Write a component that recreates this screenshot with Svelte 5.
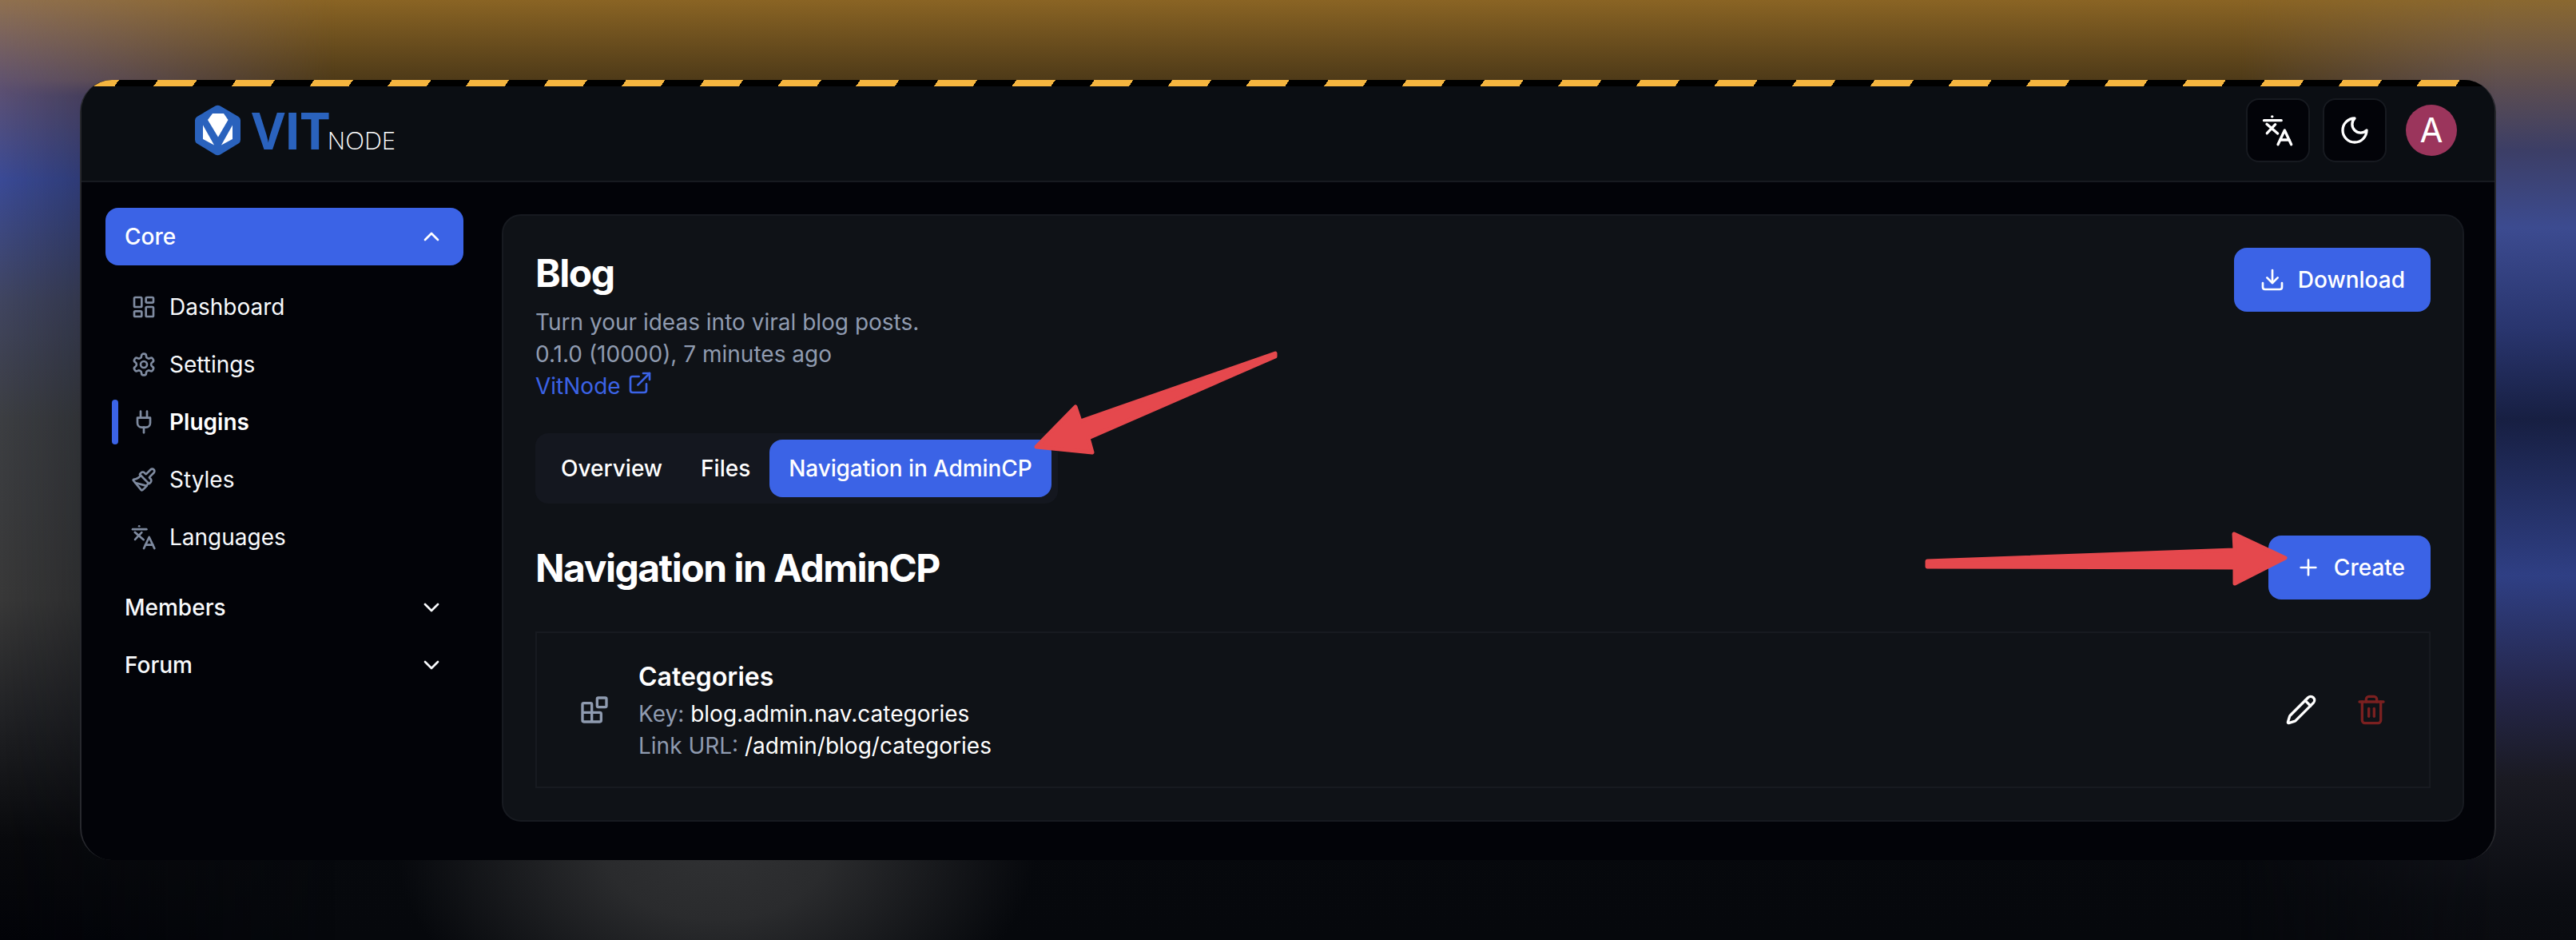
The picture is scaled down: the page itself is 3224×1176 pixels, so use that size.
<script>
  const icons = {
    dashboard: ['M4 3h5a1 1 0 0 1 1 1v7a1 1 0 0 1-1 1H4a1 1 0 0 1-1-1V4a1 1 0 0 1 1-1z', 'M15 3h5a1 1 0 0 1 1 1v3a1 1 0 0 1-1 1h-5a1 1 0 0 1-1-1V4a1 1 0 0 1 1-1z', 'M15 12h5a1 1 0 0 1 1 1v7a1 1 0 0 1-1 1h-5a1 1 0 0 1-1-1v-7a1 1 0 0 1 1-1z', 'M4 16h5a1 1 0 0 1 1 1v3a1 1 0 0 1-1 1H4a1 1 0 0 1-1-1v-3a1 1 0 0 1 1-1z'],
    settings: ['M12.22 2h-.44a2 2 0 0 0-2 2v.18a2 2 0 0 1-1 1.73l-.43.25a2 2 0 0 1-2 0l-.15-.08a2 2 0 0 0-2.73.73l-.22.38a2 2 0 0 0 .73 2.73l.15.1a2 2 0 0 1 1 1.72v.51a2 2 0 0 1-1 1.74l-.15.09a2 2 0 0 0-.73 2.73l.22.38a2 2 0 0 0 2.73.73l.15-.08a2 2 0 0 1 2 0l.43.25a2 2 0 0 1 1 1.73V20a2 2 0 0 0 2 2h.44a2 2 0 0 0 2-2v-.18a2 2 0 0 1 1-1.73l.43-.25a2 2 0 0 1 2 0l.15.08a2 2 0 0 0 2.73-.73l.22-.39a2 2 0 0 0-.73-2.73l-.15-.08a2 2 0 0 1-1-1.74v-.5a2 2 0 0 1 1-1.74l.15-.09a2 2 0 0 0 .73-2.73l-.22-.38a2 2 0 0 0-2.73-.73l-.15.08a2 2 0 0 1-2 0l-.43-.25a2 2 0 0 1-1-1.73V4a2 2 0 0 0-2-2z', 'M15 12a3 3 0 1 1-6 0 3 3 0 0 1 6 0z'],
    plug: ['M12 22v-5', 'M9 8V2', 'M15 8V2', 'M18 8v5a4 4 0 0 1-4 4h-4a4 4 0 0 1-4-4V8Z'],
    brush: ['m14.622 17.897-10.68-2.913', 'M18.376 2.622a1 1 0 1 1 3.002 3.002L17.36 9.643a.5.5 0 0 0 0 .707l.944.944a2.41 2.41 0 0 1 0 3.408l-.944.944a.5.5 0 0 1-.707 0L8.354 7.348a.5.5 0 0 1 0-.707l.944-.944a2.41 2.41 0 0 1 3.408 0l.944.944a.5.5 0 0 0 .707 0z', 'M9 8c-1.804 2.71-3.97 3.46-6.583 3.948a.507.507 0 0 0-.302.819l7.32 8.883a1 1 0 0 0 1.185.204C12.735 20.405 16 16.792 16 15'],
    languages: ['M1.5 4.6h13', 'M7.6 1.7h.1', 'M3.6 7.4l8.2 7', 'M3.8 14.2l6.2-6.6', 'M12 22.6l5-10.6 5 10.6', 'M13.6 19.2h6.8'],
    moon: ['M12 3a6 6 0 0 0 9 9 9 9 0 1 1-9-9Z'],
    download: ['M21 15v4a2 2 0 0 1-2 2H5a2 2 0 0 1-2-2v-4', 'M7 10l5 5 5-5', 'M12 15V3'],
    plus: ['M5 12h14', 'M12 5v14'],
    up: ['m18 15-6-6-6 6'],
    down: ['m6 9 6 6 6-6'],
    external: ['M15 3h6v6', 'M10 14 21 3', 'M18 13v6a2 2 0 0 1-2 2H5a2 2 0 0 1-2-2V8a2 2 0 0 1 2-2h6'],
    blocks: ['M15 3h5a1 1 0 0 1 1 1v5a1 1 0 0 1-1 1h-5a1 1 0 0 1-1-1V4a1 1 0 0 1 1-1z', 'M10 21V8a1 1 0 0 0-1-1H4a1 1 0 0 0-1 1v12a1 1 0 0 0 1 1h12a1 1 0 0 0 1-1v-5a1 1 0 0 0-1-1H3'],
    pencil: ['M21.174 6.812a1 1 0 0 0-3.986-3.987L3.842 16.174a2 2 0 0 0-.5.83l-1.321 4.352a.5.5 0 0 0 .623.622l4.353-1.32a2 2 0 0 0 .83-.497z', 'm15 5 4 4'],
    trash: ['M3 6h18', 'M19 6v14c0 1-1 2-2 2H7c-1 0-2-1-2-2V6', 'M8 6V4c0-1 1-2 2-2h4c1 0 2 1 2 2v2', 'M10 11v6', 'M14 11v6']
  };

  const navItems = [
    { label: 'Dashboard', icon: 'dashboard' },
    { label: 'Settings', icon: 'settings' },
    { label: 'Plugins', icon: 'plug', active: true },
    { label: 'Styles', icon: 'brush' },
    { label: 'Languages', icon: 'languages' }
  ];
  const tabs = ['Overview', 'Files', 'Navigation in AdminCP'];
</script>

{#snippet icon(name, size = 32)}
  <svg class="icon" width={size} height={size} viewBox="0 0 24 24" fill="none" stroke="currentColor" stroke-width="2" stroke-linecap="round" stroke-linejoin="round">
    {#each icons[name] as d}
      <path {d} />
    {/each}
  </svg>
{/snippet}

<div class="page">
  <div class="glow glow-left"></div>
  <div class="glow glow-right"></div>
  <div class="window">
    <div class="stripe"></div>
    <header>
      <div class="logo">
        <svg width="58" height="64" viewBox="0 0 58 64">
          <path d="M25.5 1.5 Q28.5 0 31.5 1.5 L54.5 15 Q57 16.5 57 19.5 L57 44 Q57 47 54.5 48.5 L31.5 62.5 Q28.5 64 25.5 62.5 L2.5 48.5 Q0 47 0 44 L0 19.5 Q0 16.5 2.5 15 Z" fill="#2a62bd" />
          <path d="M16 19 L22 11 L36 11 L41.5 19 L29 40.5 Z" fill="#fff" />
          <path d="M10 25.5 L24 50.5 L10 43 Z" fill="#fff" />
          <path d="M47 25.5 L33 50.5 L47 43 Z" fill="#fff" />
        </svg>
        <span class="vit">VIT</span><span class="node">NODE</span>
      </div>
      <div class="header-actions">
        <button class="square">{@render icon('languages', 40)}</button>
        <button class="square">{@render icon('moon', 40)}</button>
        <div class="avatar">A</div>
      </div>
    </header>
    <div class="body">
      <aside>
        <button class="group open">Core {@render icon('up')}</button>
        <nav>
          {#each navItems as item}
            <div class="item" class:active={item.active}>
              <span class="item-icon">{@render icon(item.icon)}</span>
              {item.label}
            </div>
          {/each}
        </nav>
        <button class="group">Members {@render icon('down')}</button>
        <button class="group">Forum {@render icon('down')}</button>
      </aside>
      <main>
        <div class="plugin-head">
          <div>
            <h1>Blog</h1>
            <p class="muted">Turn your ideas into viral blog posts.</p>
            <p class="muted">0.1.0 (10000), 7 minutes ago</p>
            <p class="link">VitNode <span class="link-icon">{@render icon('external')}</span></p>
          </div>
          <button class="primary">{@render icon('download')} Download</button>
        </div>
        <div class="tabs">
          {#each tabs as tab, i}
            <div class="tab" class:selected={i === 2}>{tab}</div>
          {/each}
        </div>
        <div class="section-head">
          <h2>Navigation in AdminCP</h2>
          <button class="primary create">{@render icon('plus')} Create</button>
        </div>
        <div class="row">
          <span class="row-icon">{@render icon('blocks', 40)}</span>
          <div class="row-text">
            <div class="row-title">Categories</div>
            <div class="row-line"><span class="muted">Key:</span> blog.admin.nav.categories</div>
            <div class="row-line"><span class="muted">Link URL:</span> /admin/blog/categories</div>
          </div>
          <div class="row-actions">
            {@render icon('pencil', 40)}
            <span class="danger">{@render icon('trash', 40)}</span>
          </div>
        </div>
      </main>
    </div>
  </div>

  <svg class="arrows" width="3224" height="1176" viewBox="0 0 3224 1176">
    <path d="M1596 446 L1362 548 L1367 566 L1297 559 L1346 509 L1352 527 L1596 442 Z" />
    <path d="M2412 702 L2797 688 L2796 668 L2860 698 L2797 730 L2797 710 L2412 709 Z" />
  </svg>
</div>

<style>
  :global(body) {
    background: #05070a;
  }
  .page {
    position: relative;
    width: 3224px;
    height: 1176px;
    box-sizing: border-box;
    padding: 100px;
    overflow: hidden;
    font-family: Inter, "Liberation Sans", sans-serif;
    background:
      radial-gradient(ellipse 400px 260px at 896px 1060px, #303133 0, #2a2b2d 35%, transparent 100%),
      linear-gradient(180deg, #8a6424 0, #4e3a18 100px, #0a0c12 120px, #06080c 100%);
  }
  /* blurred backdrop at the sides: colour runs top to bottom, fades toward the window */
  .glow {
    position: absolute;
    top: 0;
    bottom: 0;
    width: 420px;
  }
  .glow-left {
    left: 0;
    background: linear-gradient(180deg, #8f7050 0, #5c5072 112px, #3a4a96 225px, #404560 375px, #3c3e42 525px, #383838 750px, #202124 900px, #08090c 1050px, #020308 100%);
    -webkit-mask-image: linear-gradient(90deg, #000 0, transparent 100%);
    mask-image: linear-gradient(90deg, #000 0, transparent 100%);
  }
  .glow-right {
    right: 0;
    background: linear-gradient(180deg, #8a6830 0, #5a4c52 112px, #3c3e66 188px, #3c4b90 285px, #29356e 412px, #171f42 525px, #2f3f84 720px, #25274c 860px, #1a1a22 975px, #0b0d12 1125px, #0a0b10 100%);
    -webkit-mask-image: linear-gradient(270deg, #000 0, #000 100px, transparent 100%);
    mask-image: linear-gradient(270deg, #000 0, #000 100px, transparent 100%);
  }
  .window {
    position: relative;
    display: flex;
    flex-direction: column;
    box-sizing: border-box;
    height: 976px;
    border-left: 2px solid #27282d;
    border-right: 2px solid #27282d;
    border-radius: 40px;
    overflow: hidden;
    background: #020308;
    color: #fff;
  }
  .stripe {
    height: 8px;
    flex: none;
    background: repeating-linear-gradient(-55deg, #000, #000 40px, #f5b53f 40px, #f5b53f 80px);
  }
  header {
    flex: none;
    display: flex;
    justify-content: space-between;
    align-items: center;
    box-sizing: border-box;
    height: 120px;
    padding: 0 47px 8px 142px;
    background: #0b0e13;
    border-bottom: 2px solid #171a20;
  }
  .logo {
    display: flex;
    align-items: baseline;
  }
  .logo svg {
    align-self: center;
    margin-right: 13px;
  }
  .vit {
    font-family: "Open Sans", sans-serif;
    font-weight: 700;
    font-size: 64px;
    line-height: 64px;
    letter-spacing: -1px;
    color: #2a62bd;
  }
  .node {
    font-family: "Open Sans", sans-serif;
    font-weight: 300;
    font-size: 31px;
    margin-left: -2px;
    color: #fff;
  }
  .header-actions {
    display: flex;
    align-items: center;
    gap: 16px;
  }
  button {
    font: inherit;
    color: inherit;
    border: 0;
    cursor: pointer;
  }
  .icon {
    display: block;
    flex: none;
  }
  .square {
    display: flex;
    align-items: center;
    justify-content: center;
    width: 80px;
    height: 80px;
    padding: 0;
    background: #020308;
    border: 2px solid #171a20;
    border-radius: 16px;
  }
  .avatar {
    width: 64px;
    height: 64px;
    margin-left: 8px;
    border-radius: 50%;
    background: #9b355c;
    font-size: 42px;
    line-height: 64px;
    text-align: center;
  }
  .body {
    flex: 1;
    display: flex;
  }
  aside {
    flex: none;
    box-sizing: border-box;
    width: 526px;
    padding: 32px 48px 0 30px;
  }
  .group {
    display: flex;
    align-items: center;
    justify-content: space-between;
    width: 100%;
    height: 72px;
    padding: 0 24px;
    background: none;
    border-radius: 16px;
    font-size: 28px;
    font-weight: 500;
    color: #f8fafc;
  }
  .group.open {
    background: #3b63e6;
    color: #fff;
  }
  nav {
    margin: 16px 0;
  }
  .item {
    position: relative;
    display: flex;
    align-items: center;
    gap: 16px;
    height: 72px;
    padding-left: 32px;
    font-size: 28px;
    font-weight: 400;
    color: #f8fafc;
  }
  .item-icon {
    color: #7f8ba0;
  }
  .item.active {
    font-weight: 600;
    color: #fff;
  }
  .item.active::before {
    content: "";
    position: absolute;
    left: 8px;
    top: 8px;
    width: 8px;
    height: 56px;
    border-radius: 4px;
    background: #3b63e6;
  }
  main {
    flex: 1;
    align-self: flex-start;
    margin: 40px 38px 0 0;
    padding: 40px;
    background: #0f1217;
    border: 2px solid #171a20;
    border-radius: 24px;
  }
  .plugin-head, .section-head {
    display: flex;
    justify-content: space-between;
    align-items: flex-start;
  }
  h1 {
    margin: 0 0 9px;
    font-size: 48px;
    line-height: 64px;
    font-weight: 700;
    letter-spacing: -1.5px;
  }
  p {
    margin: 0;
    font-size: 28px;
    line-height: 40px;
  }
  .muted {
    color: #8f9bb0;
  }
  .link {
    display: flex;
    align-items: center;
    gap: 8px;
    color: #3b63e6;
  }
  .link-icon {
    margin-top: -8px;
  }
  .primary {
    display: flex;
    align-items: center;
    gap: 16px;
    height: 80px;
    padding: 0 32px;
    background: #3b63e6;
    border-radius: 16px;
    font-size: 28px;
    font-weight: 500;
    color: #fff;
  }
  .create {
    padding-left: 34px;
  }
  .tabs {
    display: inline-flex;
    margin-top: 39px;
    padding: 8px;
    background: #14171f;
    border-radius: 16px;
    vertical-align: top;
  }
  .tab {
    display: flex;
    align-items: center;
    height: 72px;
    padding: 0 24px;
    font-size: 28px;
    font-weight: 500;
    color: #fff;
    border-radius: 16px;
  }
  .tab.selected {
    background: #3b63e6;
    letter-spacing: -0.1px;
  }
  .section-head {
    align-items: center;
    margin-top: 40px;
  }
  h2 {
    margin: 0;
    font-size: 48px;
    font-weight: 700;
    letter-spacing: -1.5px;
  }
  .row {
    display: flex;
    align-items: center;
    margin-top: 40px;
    height: 196px;
    box-sizing: border-box;
    padding: 0 52px 0 52px;
    border: 2px solid #171a20;
  }
  .row-icon {
    margin-right: 35px;
    color: #8f9bb0;
  }
  .row-text {
    flex: 1;
  }
  .row-title {
    font-size: 32px;
    line-height: 48px;
    font-weight: 600;
    margin-bottom: 2px;
  }
  .row-line {
    font-size: 28px;
    line-height: 40px;
  }
  .row-actions {
    display: flex;
    align-items: center;
    gap: 48px;
  }
  .danger {
    color: #7a2020;
  }
  .arrows {
    position: absolute;
    left: 0;
    top: 0;
    pointer-events: none;
  }
  .arrows path {
    fill: #e5484d;
    stroke: #e5484d;
    stroke-width: 5;
    stroke-linejoin: round;
  }
</style>
